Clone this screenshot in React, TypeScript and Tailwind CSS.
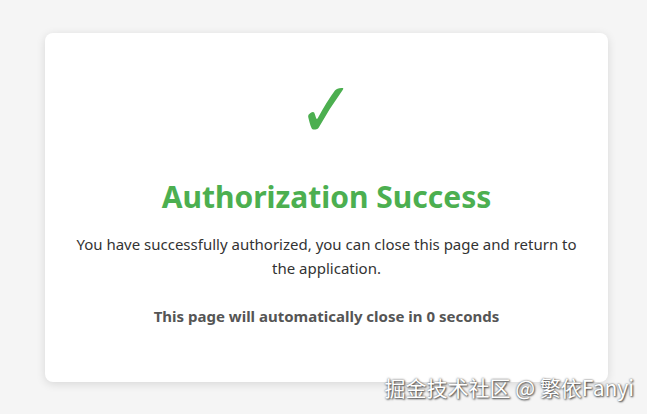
export default function App() {
  return (
    <div className="relative min-h-[414px] w-full bg-[#f5f5f5] pt-[33px] pl-[45px]" style={{ fontFamily: '"Noto Sans", "Open Sans", sans-serif' }}>
      <div className="flex h-[349px] w-[563px] flex-col items-center rounded-[8px] bg-white px-[30px] pt-[44px] text-center shadow-[0_2px_10px_rgba(0,0,0,0.12)]">
        <div className="scale-y-[1.15] text-[68px] font-light leading-none text-[#4caf50]" style={{ fontFamily: '"DejaVu Sans", sans-serif' }}>✓</div>
        <h1 className="mt-[32px] text-[30px] font-bold leading-[40px] text-[#4caf50]">Authorization Success</h1>
        <p className="mt-[15px] text-[15px] leading-[24px] text-[#333]">
          You have successfully authorized, you can close this page and return to the application.
        </p>
        <p className="mt-[24px] text-[15px] font-bold leading-[24px] text-[#555]">This page will automatically close in 0 seconds</p>
      </div>
      <div
        className="absolute bottom-[16px] right-[13px] text-[21px] leading-none text-white"
        style={{ fontFamily: '"Noto Sans CJK SC", "Noto Sans", sans-serif', textShadow: '0 0 2px #555, 1px 1px 2px #444' }}
      >
        掘金技术社区 @ 繁依Fanyi
      </div>
    </div>
  );
}
